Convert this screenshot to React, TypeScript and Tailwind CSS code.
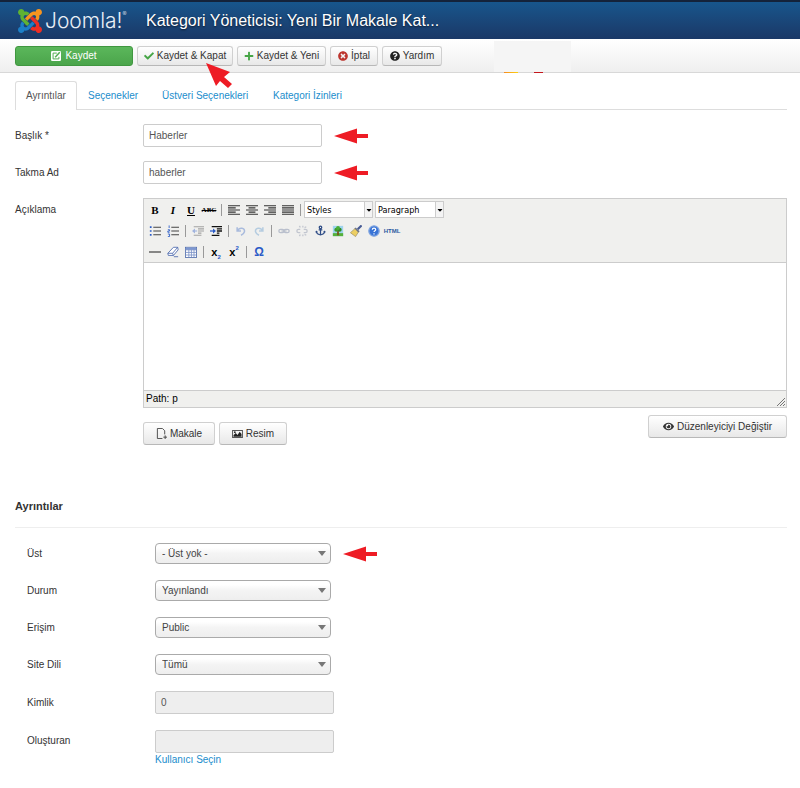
import React from 'react';
import { FaCheck, FaPlus, FaTimesCircle, FaQuestionCircle, FaEye, FaCaretDown, FaAnchor } from 'react-icons/fa';

const buttonClass =
    'flex items-center justify-center rounded-[3px] border border-[#d0d0d0] border-b-[#b8b8b8] bg-linear-to-b from-white to-[#e8e8e8] text-[10px] text-[#333]';

const inputClass = 'h-[23px] w-[179px] rounded-[2px] border border-[#ccc] px-[5px] text-[10px] text-[#555]';

const Arrow: React.FC = () => (
    <svg viewBox="0 0 34 16" className="h-4 w-[34px] shrink-0 fill-[#ee1c25]" aria-hidden="true">
        <path d="M0 8 L23 0.5 V6 H34 V10 H23 V15.5 Z" />
    </svg>
);

const JoomlaMark: React.FC = () => (
    <svg viewBox="0 32 448 448" className="h-6 w-6" aria-hidden="true">
        <path
            fill="#5fb233"
            d="M.6 92.1C.6 58.8 27.4 32 60.4 32c30 0 54.5 21.9 59.2 50.2 32.6-7.6 67.1.6 96.5 30l-44.3 44.3c-20.5-20.5-42.6-16.3-55.4-3.5-14.3 14.3-14.3 37.9 0 52.2l99.5 99.5-44 44.3c-87.7-87.2-49.7-49.7-99.8-99.7-26.8-26.5-35-64.8-24.8-98.9C20.4 144.6.6 120.7.6 92.1z"
        />
        <path
            fill="#f7941e"
            d="M130.1 208.5l44.3 44.3c10-10 89.7-89.7 99.7-99.8 14.3-14.3 37.6-14.3 51.9 0 12.8 12.8 17 35-3.5 55.4l44 44.3c31.2-31.2 38.5-67.6 28.9-101.2 29.2-4.1 51.9-29.2 51.9-59.5 0-33.2-26.8-60.1-59.8-60.1-30.3 0-55.4 22.5-59.5 51.6-33.8-9.9-71.7-1.5-98.3 25.1-18.3 19.1-71.1 71.5-99.6 99.9z"
        />
        <path
            fill="#ee2e24"
            d="M396.4 360.7c8.2-32.7-.9-68.5-26.3-93.9-11.8-12.2 5 4.7-99.5-99.7l-44.3 44.3 99.7 99.7c14.3 14.3 14.3 37.6 0 51.9-12.8 12.8-35 17-55.4-3.5l-44 44.3c27.6 30.2 68 38.800 102.700 28 5.500 27.400 29.700 48.100 58.900 48.100 33 0 59.800-26.800 59.800-60.100 0-30.200-22.500-55-51.600-59.100z"
        />
        <path
            fill="#1c7fc8"
            d="M312.1 307.600l-44-44.300c-87 86.400-50.400 50.400-99.700 99.800-14.300 14.300-37.600 14.300-51.900 0-13.100-13.400-16.900-35.300 3.200-55.400l-44-44.300c-30.200 30.200-38 65.200-29.500 98.300-26.700 6-46.200 29.900-46.200 58.200C0 453.200 26.800 480 59.800 480c28.600 0 52.500-19.800 58.600-46.700 32.700 8.200 68.500-.6 94.200-26 32.100-32 12.200-12.400 99.500-99.700z"
        />
    </svg>
);

// 14x14 drawings for the editor toolbar
const glyphs: Record<string, React.ReactNode> = {
    left: <path d="M0 2h14M0 4.500h9M0 7h14M0 9.500h9M0 12h14" stroke="#333" strokeWidth="1.3" />,
    center: <path d="M0 2h14M3 4.500h8M0 7h14M3 9.500h8M0 12h14" stroke="#333" strokeWidth="1.3" />,
    right: <path d="M0 2h14M5 4.500h9M0 7h14M5 9.500h9M0 12h14" stroke="#333" strokeWidth="1.3" />,
    justify: <path d="M0 2h14M0 4.500h14M0 7h14M0 9.500h14M0 12h14" stroke="#333" strokeWidth="1.3" />,
    bullets: (
        <>
            <path d="M5 2.500h9M5 7h9M5 11.500h9" stroke="#444" strokeWidth="1.2" />
            <path d="M1 2.500h2M1 7h2M1 11.500h2" stroke="#2a5bc7" strokeWidth="2" />
        </>
    ),
    numbers: (
        <>
            <path d="M5 2.500h9M5 7h9M5 11.500h9" stroke="#444" strokeWidth="1.2" />
            <path d="M2.500 0.500v3M1 5.500h2v1.500h-2v1.500h2M1 10.500h2v3h-2" stroke="#2a5bc7" />
        </>
    ),
    outdent: (
        <g opacity="0.4">
            <path d="M2 2h12M7 4.500h7M7 7h7M7 9.500h4M2 12h9" stroke="#333" strokeWidth="1.3" />
            <path d="M0 7 L3.500 4 V10 Z" fill="#2a5bc7" />
            <path d="M3 7h3" stroke="#2a5bc7" strokeWidth="1.3" />
        </g>
    ),
    indent: (
        <>
            <path d="M2 2h12M8 4.500h6M8 7h6M8 9.500h3M2 12h9" stroke="#111" strokeWidth="1.500" />
            <path d="M7 7 L3.500 4 V10 Z" fill="#2a5bc7" />
            <path d="M0 7h4" stroke="#2a5bc7" strokeWidth="1.500" />
        </>
    ),
    undo: <path d="M2.500 2.500v4.500h4.500M3 7c2-5 9-4 8 1c-.5 2-2 3-4 4" stroke="#a9bbdd" strokeWidth="1.8" />,
    redo: <path d="M11.500 2.500v4.500h-4.500M11 7c-2-5-9-4-8 1c.5 2 2 3 4 4" stroke="#b5cce0" strokeWidth="1.8" />,
    link: (
        <g stroke="#b9bfcc" strokeWidth="1.5">
            <rect x="1" y="5" width="6" height="4" rx="2" />
            <rect x="7" y="5" width="6" height="4" rx="2" />
            <path d="M4 7h6" />
        </g>
    ),
    unlink: (
        <g stroke="#c2c6cf" strokeWidth="1.5">
            <path d="M5 5h-2a2 2 0 0 0 0 4h2M9 5h2a2 2 0 0 1 0 4h-2M4 1l1 2M8 1v2M12 2l-2 1M4 13l1-2M8 13v-2M12 12l-2-1" />
        </g>
    ),
    image: (
        <>
            <rect x="1" y="1" width="12" height="12" fill="#9fd4ee" />
            <rect x="1" y="9.500" width="12" height="3.500" fill="#55b03a" />
            <path d="M7 6v6" stroke="#7b4d1c" strokeWidth="2" />
            <circle cx="5" cy="5.500" r="2.300" fill="#3c9a2b" />
            <circle cx="9" cy="5.500" r="2.300" fill="#2f8a25" />
            <circle cx="7" cy="3.500" r="2.300" fill="#4aae35" />
        </>
    ),
    cleanup: (
        <>
            <path d="M13.500 0.500 L9 5" stroke="#465a94" strokeWidth="2.500" />
            <path d="M6 4 L10 8 L6.500 13.500 L0.500 9 Z" fill="#edcf62" stroke="#8d8256" strokeWidth="0.700" />
            <path d="M6 3.500 L10.500 8" stroke="#6d7488" strokeWidth="2" />
        </>
    ),
    help: (
        <>
            <circle cx="7" cy="7" r="6" fill="#3974d6" stroke="#7fa4e0" strokeWidth="1.600" />
            <path d="M5 5.500c0-2.500 4-2.500 4 0c0 1.200-2 1.300-2 2.800M7 9.500v1.500" stroke="#fff" strokeWidth="1.400" />
        </>
    ),
    rule: <path d="M0 7h14" stroke="#222" strokeWidth="1.2" />,
    eraser: (
        <>
            <path d="M7.500 1.500h5l.5 3l-5.500 6.500h-6l-.5-2.500Z" fill="#fff" stroke="#4c69ad" />
            <path d="M1 8.500h5.500l1 2.500M6.500 8.500l6-7M8 12.500h5" stroke="#4c69ad" />
        </>
    ),
    grid: (
        <>
            <rect x="0.500" y="1.500" width="13" height="12" fill="#fff" stroke="#5470ad" />
            <rect x="1" y="2" width="12" height="2.500" fill="#7c97d2" />
            <path d="M1 4.500h12M1 7.500h12M1 10.500h12M4.500 4v9M7.500 4v9M10.500 4v9" stroke="#7d95c8" />
        </>
    ),
};

const Tool: React.FC<{ label: string; name?: string; children?: React.ReactNode }> = ({ label, name, children }) => (
    <button type="button" aria-label={label} className="flex h-5 w-[18px] shrink-0 items-center justify-center">
        {name ? (
            <svg viewBox="0 0 14 14" fill="none" className="h-3 w-3">
                {glyphs[name]}
            </svg>
        ) : (
            children
        )}
    </button>
);

const Divider: React.FC = () => <span className="mx-[3px] h-3 w-px shrink-0 bg-[#999]" />;

const EditorSelect: React.FC<{ label: string }> = ({ label }) => (
    <div className="relative h-[17px] w-[69px]">
        <select
            aria-label={label}
            className="h-full w-full appearance-none border border-[#ccc] bg-white px-[2px] font-['DejaVu_Sans_Condensed','DejaVu_Sans',sans-serif] text-[9px] text-black"
        >
            <option>{label}</option>
        </select>
        <span className="pointer-events-none absolute inset-y-0 right-0 flex w-[9px] items-center justify-center border border-[#ccc] bg-[#f4f4f4]">
            <FaCaretDown className="h-2 w-2 shrink-0 text-black" />
        </span>
    </div>
);

const FieldSelect: React.FC<{ id: string; value: string }> = ({ id, value }) => (
    <div className="relative h-[21px] w-[176px]">
        <select
            id={id}
            className="h-full w-full appearance-none rounded-[4px] border border-[#aaa] bg-linear-to-b from-white from-20% via-[#f4f4f4] to-[#eee] px-[6px] text-[10px] text-[#444]"
        >
            <option>{value}</option>
        </select>
        <svg viewBox="0 0 8 5" className="pointer-events-none absolute top-[8px] right-[5px] h-[5px] w-2 fill-[#777]" aria-hidden="true">
            <path d="M0 0H8L4 5Z" />
        </svg>
    </div>
);

const detailFields = [
    { id: 'parent', label: 'Üst', value: '- Üst yok -', marked: true },
    { id: 'status', label: 'Durum', value: 'Yayınlandı', marked: false },
    { id: 'access', label: 'Erişim', value: 'Public', marked: false },
    { id: 'language', label: 'Site Dili', value: 'Tümü', marked: false },
];

const App: React.FC = () => {
    return (
        <div className="min-h-screen bg-white pb-6 font-['Liberation_Sans',Arial,sans-serif] text-[10px] leading-[14px] text-[#333]">
            <header className="flex h-[39px] items-center border-t-2 border-[#14233a] bg-linear-to-b from-[#17568c] to-[#1a3867] pl-[18px] text-white">
                <JoomlaMark />
                <div className="ml-[3px] flex w-[101px] items-start font-['Inter',sans-serif] text-[21px] leading-6 font-light text-[#e9eff6]">
                    Joomla!<span className="text-[6px] leading-[10px]">®</span>
                </div>
                <h1 className="text-[16px] leading-5 text-shadow-[0_1px_2px_rgb(0_0_0/0.6)]">
                    Kategori Yöneticisi: Yeni Bir Makale Kat...
                </h1>
            </header>

            <div className="relative flex h-[34px] items-center gap-1 border-b border-[#d8d8d8] bg-linear-to-b from-white to-[#efefef] px-[15px]">
                <button className="flex h-5 w-[118px] items-center justify-center gap-1 rounded-[3px] border border-[#409740] bg-linear-to-b from-[#5bb75b] to-[#4ba54b] text-white">
                    <svg viewBox="0 0 12 12" className="h-[10px] w-[10px]" fill="none">
                        <rect width="12" height="12" rx="1.5" fill="#fff" />
                        <path d="M7 2.5H2.5v7h7V7" stroke="#55ae55" strokeWidth="1.2" />
                        <path d="M5 7.5 L10.5 1.5" stroke="#55ae55" strokeWidth="1.8" />
                    </svg>
                    Kaydet
                </button>
                <div className="relative">
                    <button className={`${buttonClass} h-5 w-24 gap-[3px]`}>
                        <FaCheck className="h-[10px] w-[10px] text-[#46a546]" />
                        Kaydet &amp; Kapat
                    </button>
                    <svg viewBox="0 0 28 28" className="absolute top-[16px] left-[68px] z-10 h-7 w-7 fill-[#ee1c25]" aria-hidden="true">
                        <path d="M1 1 L25 10 L19 15 L27 22 L23 26 L15 19 L11 24 Z" />
                    </svg>
                </div>
                <button className={`${buttonClass} h-5 w-[89px] gap-[3px]`}>
                    <FaPlus className="h-[10px] w-[10px] text-[#46a546]" />
                    Kaydet &amp; Yeni
                </button>
                <button className={`${buttonClass} h-5 w-12 gap-[3px]`}>
                    <FaTimesCircle className="h-[10px] w-[10px] text-[#bd362f]" />
                    İptal
                </button>
                <button className={`${buttonClass} h-5 w-[60px] gap-[3px]`}>
                    <FaQuestionCircle className="h-[10px] w-[10px] text-[#222]" />
                    Yardım
                </button>
                <span className="absolute top-[2px] left-[494px] h-[31px] w-[77px] bg-[#f5f5f5]" />
                <span className="absolute top-[33px] left-[504px] h-px w-[14px] bg-linear-to-r from-[#f58a1e] to-[#fbd010]" />
                <span className="absolute top-[33px] left-[534px] h-px w-[9px] bg-[#c4161c]" />
            </div>

            <main className="pt-[8px] pr-[13px] pl-[15px]">
                <nav className="flex h-[29px] border-b border-[#ddd] text-[#1a8dcc]">
                    <a href="#details" className="flex h-[29px] w-[62px] items-center justify-center rounded-t-[3px] border border-b-0 border-[#ddd] bg-white text-[#555]">
                        Ayrıntılar
                    </a>
                    <a href="#options" className="ml-[11px] flex w-[74px] items-center pt-[2px]">Seçenekler</a>
                    <a href="#metadata" className="flex w-[111px] items-center pt-[2px]">Üstveri Seçenekleri</a>
                    <a href="#permissions" className="flex items-center pt-[2px]">Kategori İzinleri</a>
                </nav>

                <form className="mt-[14px] flex flex-col gap-[14px]">
                    <div className="flex items-center">
                        <label htmlFor="title" className="w-32">Başlık *</label>
                        <input id="title" className={inputClass} defaultValue="Haberler" />
                        <div className="ml-3"><Arrow /></div>
                    </div>
                    <div className="flex items-center">
                        <label htmlFor="alias" className="w-32">Takma Ad</label>
                        <input id="alias" className={inputClass} defaultValue="haberler" />
                        <div className="ml-3"><Arrow /></div>
                    </div>
                    <div className="flex items-start">
                        <label htmlFor="description" className="w-32 shrink-0 pt-[5px]">Açıklama</label>
                        <div className="min-w-0 flex-1">
                            <div className="border border-[#ccc] bg-[#f0f0ee]">
                                <div className="flex flex-col border-b border-[#ccc] pl-[2px]">
                                    <div className="flex h-[21px] items-center">
                                        <Tool label="Bold"><b className="font-['Liberation_Serif',serif] text-[11px] text-black">B</b></Tool>
                                        <Tool label="Italic"><b className="font-['Liberation_Serif',serif] text-[11px] text-black italic">I</b></Tool>
                                        <Tool label="Underline"><b className="font-['Liberation_Serif',serif] text-[11px] text-black underline">U</b></Tool>
                                        <Tool label="Strikethrough"><b className="font-['Liberation_Serif',serif] text-[7px] text-black line-through">ABC</b></Tool>
                                        <Divider />
                                        <Tool label="Align left" name="left" />
                                        <Tool label="Align center" name="center" />
                                        <Tool label="Align right" name="right" />
                                        <Tool label="Justify" name="justify" />
                                        <Divider />
                                        <div className="flex gap-[2px]">
                                            <EditorSelect label="Styles" />
                                            <EditorSelect label="Paragraph" />
                                        </div>
                                    </div>
                                    <div className="flex h-[21px] items-center">
                                        <Tool label="Bullet list" name="bullets" />
                                        <Tool label="Numbered list" name="numbers" />
                                        <Divider />
                                        <Tool label="Outdent" name="outdent" />
                                        <Tool label="Indent" name="indent" />
                                        <Divider />
                                        <Tool label="Undo" name="undo" />
                                        <Tool label="Redo" name="redo" />
                                        <Divider />
                                        <Tool label="Link" name="link" />
                                        <Tool label="Unlink" name="unlink" />
                                        <Tool label="Anchor"><FaAnchor className="h-[11px] w-[11px] text-[#2f4d86]" /></Tool>
                                        <Tool label="Image" name="image" />
                                        <Tool label="Clean up" name="cleanup" />
                                        <Tool label="Help" name="help" />
                                        <Tool label="Source"><b className="text-[6px] text-[#2c5aa0]">HTML</b></Tool>
                                    </div>
                                    <div className="flex h-[21px] items-center">
                                        <Tool label="Horizontal rule" name="rule" />
                                        <Tool label="Remove formatting" name="eraser" />
                                        <Tool label="Toggle guidelines" name="grid" />
                                        <Divider />
                                        <Tool label="Subscript">
                                            <b className="text-[11px] leading-3 text-black">x</b>
                                            <b className="self-end text-[6px] leading-[10px] text-[#2a5bc7]">2</b>
                                        </Tool>
                                        <Tool label="Superscript">
                                            <b className="text-[11px] leading-3 text-black">x</b>
                                            <b className="self-start text-[6px] leading-[12px] text-[#2a5bc7]">2</b>
                                        </Tool>
                                        <Divider />
                                        <Tool label="Special character"><b className="text-[12px] text-[#2a5bc7]">Ω</b></Tool>
                                    </div>
                                </div>
                                <textarea id="description" className="block h-[127px] w-full resize-none bg-white p-2" />
                                <div className="flex h-[17px] items-center justify-between border-t border-[#ccc] pl-[2px] text-black">
                                    <span>Path: p</span>
                                    <svg viewBox="0 0 10 10" className="h-[10px] w-[10px] self-end" stroke="#777">
                                        <path d="M1 9 L9 1 M4 9 L9 4 M7 9 L9 7" />
                                    </svg>
                                </div>
                            </div>
                            <div className="mt-[7px] flex items-start justify-between">
                                <div className="flex gap-1 pt-[7px]">
                                    <button type="button" className={`${buttonClass} h-[23px] w-[72px] gap-[3px]`}>
                                        <svg viewBox="0 0 12 12" className="h-[11px] w-[11px]" fill="none" stroke="#444">
                                            <path d="M7 11.5H1.500V0.500H7L9.500 3V7M10 8v4M8 10h4" />
                                        </svg>
                                        Makale
                                    </button>
                                    <button type="button" className={`${buttonClass} h-[23px] w-[68px] gap-[3px]`}>
                                        <svg viewBox="0 0 12 9" className="h-[8px] w-[11px]" fill="none">
                                            <rect x="0.500" y="0.500" width="11" height="8" stroke="#444" />
                                            <path d="M1.500 7.500V6L4 3.500L6 5.500L8.500 2L10.500 4.500V7.500Z" fill="#222" />
                                            <circle cx="3" cy="2.500" r="1" fill="#222" />
                                        </svg>
                                        Resim
                                    </button>
                                </div>
                                <button type="button" className={`${buttonClass} h-[23px] w-[139px] gap-[3px]`}>
                                    <FaEye className="h-[11px] w-[11px]" />
                                    Düzenleyiciyi Değiştir
                                </button>
                            </div>
                        </div>
                    </div>
                </form>

                <section className="mt-[54px]">
                    <h2 className="border-b border-[#eee] pb-[14px] text-[11px] font-bold">Ayrıntılar</h2>
                    <div className="mt-[15px] flex flex-col gap-4 pl-3">
                        {detailFields.map((field) => (
                            <div key={field.id} className="flex h-[21px] items-center">
                                <label htmlFor={field.id} className="w-32">{field.label}</label>
                                <FieldSelect id={field.id} value={field.value} />
                                {field.marked && <div className="ml-3"><Arrow /></div>}
                            </div>
                        ))}
                        <div className="flex items-center">
                            <label htmlFor="record-id" className="w-32">Kimlik</label>
                            <input id="record-id" readOnly defaultValue="0" className={`${inputClass} bg-[#eee]`} />
                        </div>
                        <div className="flex items-start">
                            <label htmlFor="author" className="w-32 pt-1">Oluşturan</label>
                            <div className="flex flex-col">
                                <input id="author" readOnly className={`${inputClass} bg-[#eee]`} />
                                <a href="#user" className="text-[#1a8dcc]">Kullanıcı Seçin</a>
                            </div>
                        </div>
                    </div>
                </section>
            </main>
        </div>
    );
};

export default App;
